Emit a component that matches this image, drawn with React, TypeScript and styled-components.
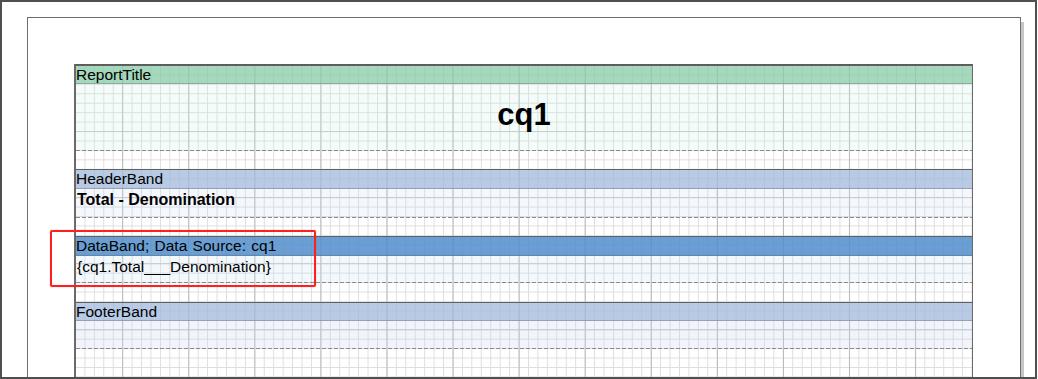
import React from "react";
import styled, { createGlobalStyle } from "styled-components";

const GlobalStyle = createGlobalStyle`
  html, body { margin: 0; padding: 0; background: #fff; }
  body { font-family: "Liberation Sans", Arial, sans-serif; }
`;

const Frame = styled.div`
  position: relative;
  box-sizing: border-box;
  width: 1037px;
  height: 379px;
  border: 2px solid #4f4f4f;
  background: #fff;
  overflow: hidden;
  padding: 15px 0 0 25px;
`;

const Page = styled.div`
  box-sizing: border-box;
  width: 994px;
  height: 600px;
  border: 1px solid #6e6e6e;
  background: #fff;
  box-shadow: 3px 5px 0 #c6c6c6;
  padding: 46px 0 0 46px;
`;

const Design = styled.div`
  box-sizing: border-box;
  width: 899px;
  height: 400px;
  border-top: 1px solid #5c5c5c;
  border-left: 2px solid #6a6a6a;
  border-right: 1px solid #6a6a6a;
  background-color: #fff;
  background-image:
    linear-gradient(to right, #b9b9b9 1px, transparent 1px),
    linear-gradient(to bottom, #c4c4c4 1px, transparent 1px),
    linear-gradient(to right, #dddddd 1px, transparent 1px),
    linear-gradient(to bottom, #dddddd 1px, transparent 1px);
  background-size: 66.08px 100%, 100% 66.08px, 9.44px 100%, 100% 9.44px;
  background-position: 46.2px 0, 0 0, -1px 0, 0 0;
  display: flex;
  flex-direction: column;
`;

const Caption = styled.div<{ $bg: string; $h: number }>`
  box-sizing: border-box;
  height: ${(p) => p.$h}px;
  border-top: 1px solid #606060;
  border-bottom: 1px solid rgba(80, 80, 80, 0.3);
  background: ${(p) => p.$bg};
  font-size: 15.5px;
  line-height: 17px;
  word-spacing: 1px;
  color: #000;
  white-space: nowrap;
`;

const Content = styled.div<{ $bg: string; $h: number }>`
  box-sizing: border-box;
  height: ${(p) => p.$h}px;
  background:
    repeating-linear-gradient(to right, #8a8a8a 0 4px, transparent 4px 6px) left bottom / 100% 1px no-repeat,
    ${(p) => p.$bg};
`;

const Gap = styled.div<{ $h: number }>`
  height: ${(p) => p.$h}px;
  flex: none;
`;

const TitleText = styled.div`
  padding-top: 13px;
  text-align: center;
  font-size: 31px;
  line-height: 35px;
  font-weight: bold;
  color: #000;
`;

const FieldText = styled.div<{ $bold?: boolean }>`
  padding-top: 2px;
  padding-left: 1px;
  font-size: ${(p) => (p.$bold ? 16 : 15.5)}px;
  line-height: ${(p) => (p.$bold ? 18 : 17)}px;
  font-weight: ${(p) => (p.$bold ? "bold" : "normal")};
  color: #000;
  white-space: nowrap;
`;

const Highlight = styled.div`
  position: absolute;
  left: 48px;
  top: 228px;
  width: 266px;
  height: 57px;
  box-sizing: border-box;
  border: 2px solid #ff1f1f;
  border-radius: 2px;
  box-shadow: 0 0 1px rgba(255, 0, 0, 0.6);
  pointer-events: none;
`;

const GREEN = "rgba(136, 203, 167, 0.75)";
const LIGHTBLUE = "rgba(160, 184, 219, 0.75)";
const BLUE = "rgba(81, 142, 203, 0.85)";

export default function App() {
  return (
    <>
      <GlobalStyle />
      <Frame>
        <Page>
          <Design>
            <Caption $bg={GREEN} $h={19}>ReportTitle</Caption>
            <Content $bg="rgba(205, 240, 232, 0.22)" $h={67}>
              <TitleText>cq1</TitleText>
            </Content>
            <Gap $h={18} />
            <Caption $bg={LIGHTBLUE} $h={20}>HeaderBand</Caption>
            <Content $bg="rgba(200, 215, 238, 0.2)" $h={29}>
              <FieldText $bold>Total - Denomination</FieldText>
            </Content>
            <Gap $h={18} />
            <Caption $bg={BLUE} $h={20}>DataBand; Data Source: cq1</Caption>
            <Content $bg="rgba(200, 222, 245, 0.22)" $h={27}>
              <FieldText>{"{cq1.Total___Denomination}"}</FieldText>
            </Content>
            <Gap $h={19} />
            <Caption $bg={LIGHTBLUE} $h={19}>FooterBand</Caption>
            <Content $bg="rgba(200, 215, 238, 0.25)" $h={28} />
          </Design>
        </Page>
        <Highlight />
      </Frame>
    </>
  );
}
